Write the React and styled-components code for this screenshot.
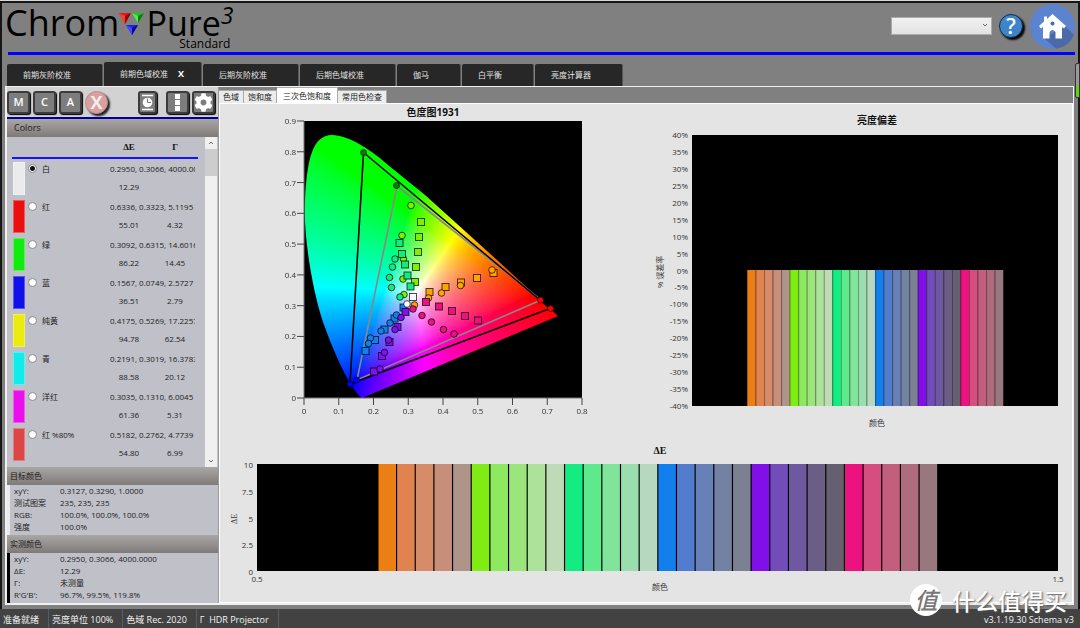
import { useEffect, useRef } from "react";
import styled, { createGlobalStyle } from "styled-components";
import { FaCog } from "react-icons/fa";

const GlobalStyle = createGlobalStyle`
  * {
    box-sizing: border-box;
  }
  body {
    margin: 0;
    background: #808080;
    color: #222;
    font-family: "Open Sans", "Noto Sans CJK SC", sans-serif;
    font-size: 8px;
    line-height: 12px;
  }
  button, select, input {
    font: inherit;
    margin: 0;
  }
`;

const Page = styled.div`
  position: relative;
  display: flex;
  flex-direction: column;
  min-height: 100vh;
  border-top: 1px solid #d8d8d8;
  background: #808080;
`;

const Frame = styled.div`
  flex: 1;
  display: flex;
  flex-direction: column;
  border: 2px solid #161616;
  border-width: 2px 2px 0 2px;
`;

/* header */

const Header = styled.header`
  display: flex;
  justify-content: space-between;
  height: 52px;
  margin: 0 3px 0 6px;
  border-bottom: 3px solid #0000ff;
`;

const Logo = styled.div`
  display: flex;
  align-items: flex-start;
  margin-left: -3px;
  color: #000;
  font-size: 36px;
  line-height: 40px;

  svg {
    width: 26px;
    height: 24px;
    margin: 9px 1px 0 0;
  }
`;

const Edition = styled.div`
  display: flex;
  flex-direction: column;
  align-items: flex-end;
`;

const Pure = styled.div`
  display: flex;
  height: 34px;
  font-size: 34px;
  line-height: 40px;

  sup {
    font-size: 23px;
    font-style: italic;
    line-height: 24px;
    vertical-align: top;
  }
`;

const EditionName = styled.small`
  margin-right: 3px;
  font-size: 12px;
  line-height: 14px;
`;

const HeaderTools = styled.div`
  display: flex;
  align-items: center;
  gap: 7px;
  height: 46px;
`;

const ProfileSelect = styled.select`
  appearance: none;
  width: 101px;
  height: 18px;
  padding: 0 6px;
  border: 1px solid #aaa;
  border-radius: 0;
  background: linear-gradient(#f0f0f0, #e3e3e3);
`;

const SelectWrap = styled.label`
  position: relative;
  display: flex;

  svg {
    position: absolute;
    right: 4px;
    top: 6px;
    pointer-events: none;
  }
`;

const HelpButton = styled.button`
  width: 24px;
  height: 24px;
  padding: 0;
  border: 1px solid #0c2c4c;
  border-radius: 50%;
  background: #3f83c9;
  box-shadow: 2px 2px 2px #000;
  color: #fff;
  font-size: 21px;
  font-weight: 600;
  line-height: 21px;
`;

const HomeButton = styled.button`
  width: 45px;
  height: 45px;
  padding: 0;
  border: 0;
  border-radius: 50%;
  background: none;

  svg {
    display: block;
  }
`;

/* page tabs */

const PageTabs = styled.nav`
  display: flex;
  align-items: flex-end;
  gap: 1px;
  height: 31px;
  margin-left: 5px;
`;

const PageTab = styled.button`
  display: flex;
  align-items: center;
  height: ${(p) => (p.$active ? "24px" : "22px")};
  padding: 0 ${(p) => (p.$active ? "17px" : "31px")} 0 16px;
  border: 0;
  border-right: 1px solid #555;
  border-radius: 2px 2px 0 0;
  background: #272727;
  color: #e2e2e2;

  b {
    width: 16px;
    text-align: right;
    font-size: 9px;
    color: #fff;
  }
`;

/* workspace */

const Workspace = styled.main`
  flex: 1;
  display: flex;
  margin: 0 4px 4px 3px;
  border: 2px solid #f0f0f0;
  border-width: 1px 1px 2px 2px;
`;

const Sidebar = styled.aside`
  flex: none;
  display: flex;
  flex-direction: column;
  width: 212px;
  border-right: 1px solid #999;
  background: #bfc0c8;
`;

const Toolbar = styled.div`
  display: flex;
  align-items: center;
  gap: 3px;
  height: 32px;
  padding: 0 3px 0 0;
  border-bottom: 2px solid #0000a0;
  background: #d2d2d2;
`;

const ToolButton = styled.button`
  display: flex;
  align-items: center;
  justify-content: center;
  width: ${(p) => (p.$narrow ? "19px" : "23px")};
  height: 23px;
  margin-left: ${(p) => (p.$apart ? "auto" : "0")};
  padding: 0;
  border: 2px solid #3c3c3c;
  border-radius: 3px;
  background: #7d7d7d;
  box-shadow: 1px 1px 1px #000;
  color: #fff;
  font-size: 11px;
  font-weight: 600;
`;

const StopButton = styled.button`
  width: 23px;
  height: 23px;
  padding: 0;
  border: 1px solid #b98e8e;
  border-radius: 50%;
  background: #d9a0a0;
  box-shadow: 2px 2px 2px #222;
  color: #eee;
  font-size: 18px;
  font-weight: 700;
  line-height: 20px;
`;

const Gap = styled.span`
  width: 3px;
`;

const PanelTitle = styled.h2`
  flex: none;
  height: 18px;
  margin: 0;
  padding: 0 ${(p) => (p.$wide ? "7px" : "3px")};
  background: linear-gradient(#a9a7a6, #7e7a78);
  color: #1c1c1c;
  font-size: ${(p) => (p.$wide ? "9px" : "8px")};
  font-weight: 400;
  line-height: 18px;
`;

const ColorList = styled.div`
  flex: 1 1 0;
  display: flex;
  justify-content: space-between;
  min-height: 0;
  overflow: hidden;
  padding: 0 1px 0 5px;
`;

const ColorTable = styled.table`
  width: 186px;
  height: 0;
  table-layout: fixed;
  border-spacing: 0;

  th {
    height: 22px;
    padding: 0;
    border-bottom: 2px solid #1414ff;
    font: 700 9px "Liberation Serif", serif;
    color: #111;
  }
  td {
    height: 19px;
    padding: 0;
    text-align: center;
    white-space: nowrap;
  }
`;

const SwatchCell = styled.td`
  vertical-align: top;

  span {
    display: block;
    width: 12px;
    height: 33px;
    margin: 3px 0 0 1px;
    border: 1px solid rgba(255, 255, 255, 0.3);
    background: ${(p) => p.$color};
  }
`;

const NameCell = styled.td`
  label {
    display: flex;
    align-items: center;
    gap: 5px;
  }
`;

const Radio = styled.input.attrs({ type: "radio", name: "color" })`
  appearance: none;
  width: 9px;
  height: 9px;
  border: 1px solid #8a8a8a;
  border-radius: 50%;
  background: #fff;

  &:checked {
    background: radial-gradient(#111 0 2px, #fff 3px);
  }
`;

const XyValue = styled.span`
  display: block;
  width: 85px;
  margin-left: 4px;
  overflow: hidden;
  text-align: left;
`;

const NumberRow = styled.tr`
  && td {
    padding-bottom: 2px;
  }
`;

const Scrollbar = styled.div`
  display: flex;
  flex-direction: column;
  justify-content: space-between;
  width: 12px;
  background: #f0f0f0;

  button {
    display: flex;
    align-items: center;
    justify-content: center;
    height: 12px;
    padding: 0;
    border: 0;
    background: none;
  }
`;

const Thumb = styled.div`
  height: 27px;
  margin-bottom: auto;
  background: #cdcdcd;
`;

const Details = styled.dl`
  flex: none;
  display: grid;
  grid-template-columns: 46px 1fr;
  margin: 0;
  padding: 0 0 2px 4px;
  border-left: 3px solid ${(p) => p.$color};

  dt, dd {
    margin: 0;
    height: 12px;
    white-space: nowrap;
  }
`;

/* charts */

const Content = styled.section`
  flex: 1;
  display: flex;
  flex-direction: column;
  min-width: 0;
  background: #808080;
`;

const ChartTabs = styled.nav`
  display: flex;
  align-items: flex-end;
  height: 16px;
`;

const ChartTab = styled.button`
  height: ${(p) => (p.$active ? "16px" : "13px")};
  padding: 0 ${(p) => (p.$active ? "6px" : "4px")};
  border: 1px solid #aaa;
  border-bottom: 0;
  border-left-width: 0;
  background: ${(p) => (p.$active ? "#fff" : "#ececec")};
  color: #222;
  line-height: 12px;
`;

const ChartPanel = styled.div`
  flex: 1;
  display: grid;
  grid-template-columns: 1fr 1fr;
  align-content: start;
  border: 1px solid #fff;
  background: #e4e4e4;

  svg {
    display: block;
    width: 100%;
    height: auto;
  }
`;

const WideChart = styled.div`
  grid-column: 1 / -1;
`;

const ChartText = styled.text`
  fill: #333;
  font-size: 8px;
  text-anchor: ${(p) => p.$anchor || "middle"};
`;

const ChartTitle = styled.text`
  fill: #111;
  font-size: 10px;
  font-weight: 700;
  text-anchor: middle;
`;

/* status bar */

const StatusBar = styled.footer`
  display: flex;
  height: 19px;
  padding-right: 6px;
  background: #424242;
  color: #f2f2f2;
  font-size: 9px;
  line-height: 22px;

  span {
    padding: 0 9px 0 3px;
    border-right: 1px solid #5c5c5c;
  }
  span:last-child {
    margin-left: auto;
    padding: 0;
    border: 0;
  }
`;

const LevelMeter = styled.div`
  position: absolute;
  top: 62px;
  right: 0;
  width: 5px;
  height: 35px;
  border: 1px solid #333;
  border-radius: 2px 0 0 2px;
  background: linear-gradient(#999 0 21px, #5ad80c 22px);
`;

const Watermark = styled.div`
  position: absolute;
  right: 13px;
  bottom: 12px;
  display: flex;
  align-items: center;
  gap: 10px;
  color: #fff;
  font-family: "Noto Sans CJK SC", sans-serif;
  font-size: 23px;
  font-weight: 500;
  line-height: 24px;
  text-shadow: 1px 1px 2px #555;

  i {
    width: 32px;
    height: 32px;
    border-radius: 50%;
    background: #fff;
    color: #777;
    line-height: 30px;
    text-align: center;
    text-shadow: none;
  }
`;

const colors = [
  { name: "白", color: "#ebebeb", xyY: "0.2950, 0.3066, 4000.0000", de: "12.29", gamma: "" },
  { name: "红", color: "#eb1010", xyY: "0.6336, 0.3323, 5.1195", de: "55.01", gamma: "4.32" },
  { name: "绿", color: "#10eb10", xyY: "0.3092, 0.6315, 14.6016", de: "86.22", gamma: "14.45" },
  { name: "蓝", color: "#1010eb", xyY: "0.1567, 0.0749, 2.5727", de: "36.51", gamma: "2.79" },
  { name: "纯黄", color: "#ebeb10", xyY: "0.4175, 0.5269, 17.2257", de: "94.78", gamma: "62.54" },
  { name: "青", color: "#10ebeb", xyY: "0.2191, 0.3019, 16.3783", de: "88.58", gamma: "20.12" },
  { name: "洋红", color: "#eb10eb", xyY: "0.3035, 0.1310, 6.0045", de: "61.36", gamma: "5.31" },
  { name: "红 %80%", color: "#dc4646", xyY: "0.5182, 0.2762, 4.7739", de: "54.80", gamma: "6.99" },
];

const pageTabs = ["前期灰阶校准", "前期色域校准", "后期灰阶校准", "后期色域校准", "伽马", "白平衡", "亮度计算器"];
const chartTabs = ["色域", "饱和度", "三次色饱和度", "常用色检查"];

const barColors = [
  "#ec7f13", "#e1834f", "#d68b69", "#c78e79", "#af9489",
  "#80ec13", "#8de95f", "#9be57d", "#ade29a", "#bfdab7",
  "#13ec80", "#5fe98d", "#80e59b", "#9adead", "#b5d8bf",
  "#137fec", "#527dcf", "#6880b8", "#7381a3", "#7b8092",
  "#800fe8", "#724dba", "#6e589f", "#6a5e87", "#655f70",
  "#ec1380", "#d64d7f", "#c25f7e", "#af6c7e", "#99777f",
];

// measured values are circles, targets are squares
const markers = [
  {
    fill: "#80f000",
    squares: [[117, 101], [115, 116], [114, 131], [112, 146], [111, 161]],
    circles: [[107, 84.5], [98, 114.5], [99.5, 138], [99, 158], [100, 173.5]],
  },
  {
    fill: "#10ec80",
    squares: [[95.5, 122], [98, 133], [101, 143.5], [103.5, 154.5], [106.5, 165.5]],
    circles: [[91, 138], [88.5, 146], [85.5, 156.5], [87.5, 166.5], [96, 176]],
  },
  {
    fill: "#ffa500",
    squares: [[189.5, 152], [173, 157], [157, 161.5], [141.5, 166], [125.5, 171]],
    circles: [[188, 149], [156.5, 164.5], [137.5, 172], [124.5, 177], [110.5, 184]],
  },
  {
    fill: "#ec1080",
    squares: [[122, 181], [135, 185.5], [148, 190], [161, 195], [174, 199.5]],
    circles: [[109, 188], [118, 194.5], [127.5, 201], [139.5, 208.5], [150, 213]],
  },
  {
    fill: "#1080ec",
    squares: [[99.5, 186.5], [90.5, 197.5], [80.5, 208.5], [71, 219], [61.5, 230]],
    circles: [[92.5, 194], [86, 202], [77, 210], [66.5, 217], [64.5, 222.5]],
  },
  {
    fill: "#8010ec",
    squares: [[101.5, 191], [93.5, 206], [85.5, 221], [78, 235], [70, 250.5]],
    circles: [[97, 196.5], [91, 208.5], [84.5, 219], [80.5, 231.5], [76, 248]],
  },
  { fill: "#fff", squares: [[109, 176]], circles: [[103, 183]] },
];

const LOCUS =
  "M58 277 C48 270 33 240 19 201 C8 167 -1 112 1 79 C3 40 8 14 28 14 C44 14 66 28 84 44 L121 74 L193 139 L254 195 Z";

const W = 278;
const H = 277;

const rgbAt = (x, y) => {
  const z = 1 - x - y;
  const rgb = [
    3.2406 * x - 1.5372 * y - 0.4986 * z,
    -0.9689 * x + 1.8758 * y + 0.0415 * z,
    1.2 * (0.0557 * x - 0.204 * y + 1.057 * z),
  ].map((v) => Math.max(0, v));
  const max = Math.max(...rgb);
  return rgb.map((v) => 255 * Math.pow(v / max, 0.65));
};

const LocusFill = () => {
  const ref = useRef(null);

  useEffect(() => {
    const ctx = ref.current.getContext("2d");
    const image = ctx.createImageData(W, H);
    for (let py = 0; py < H; py++) {
      for (let px = 0; px < W; px++) {
        const [r, g, b] = rgbAt((px / W) * 0.8, ((H - py) / H) * 0.9);
        image.data.set([r, g, b, 255], (py * W + px) * 4);
      }
    }
    ctx.putImageData(image, 0, 0);
    ctx.globalCompositeOperation = "destination-in";
    ctx.fill(new Path2D(LOCUS));
  }, []);

  return (
    <foreignObject width={W} height={H}>
      <canvas ref={ref} width={W} height={H} style={{ display: "block" }} />
    </foreignObject>
  );
};

const GamutPoint = ({ x, y, fill }) => (
  <circle cx={x} cy={y} r="3" fill={fill} stroke="#000" strokeOpacity="0.6" />
);

const ChromaticityChart = () => (
  <svg viewBox="0 0 426 330" role="img" aria-label="色度图1931">
    <ChartTitle x="213" y="12">色度图1931</ChartTitle>
    <g transform="translate(84 17)">
      <rect width={W} height={H} fill="#000" />
      <LocusFill />
      <path d="M93 65 L237 179 L53 259 Z" fill="none" stroke="#888" strokeWidth="1.6" />
      <path d="M59.5 31.5 L246 187.5 L46 263 Z" fill="none" stroke="#000" strokeWidth="1.6" />
      <GamutPoint x={59.5} y={31.5} fill="#008000" />
      <GamutPoint x={92.5} y={64.5} fill="#008000" />
      <GamutPoint x={246.5} y={187.5} fill="#f00" />
      <GamutPoint x={236.5} y={179} fill="#f00" />
      <GamutPoint x={46} y={263} fill="#00f" />
      <GamutPoint x={52.5} y={259} fill="#00f" />
      {markers.map((m) => (
        <g key={m.fill} fill={m.fill} stroke="#000" strokeOpacity="0.7">
          {m.squares.map(([x, y]) => (
            <rect key={x} x={x - 3.5} y={y - 3.5} width="7" height="7" />
          ))}
          {m.circles.map(([x, y]) => (
            <circle key={x} cx={x} cy={y} r="3.3" />
          ))}
        </g>
      ))}
      <path d={`M0 0 V${H} H${W}`} fill="none" stroke="#777" />
      {[0, 1, 2, 3, 4, 5, 6, 7, 8, 9].map((n) => {
        const y = H - (n * H) / 9;
        return (
          <g key={n}>
            <path d={`M-7 ${y} H0`} stroke="#444" />
            <ChartText x="-8" y={y + 3} $anchor="end">{n ? `0.${n}` : "0"}</ChartText>
          </g>
        );
      })}
      {[0, 1, 2, 3, 4, 5, 6, 7, 8].map((n) => {
        const x = (n * W) / 8;
        return (
          <g key={n}>
            <path d={`M${x} ${H} V${H + 7}`} stroke="#444" />
            <ChartText x={x} y={H + 16}>{n ? `0.${n}` : "0"}</ChartText>
          </g>
        );
      })}
    </g>
  </svg>
);

const LuminanceChart = () => (
  <svg viewBox="0 0 426 330" role="img" aria-label="亮度偏差">
    <ChartTitle x="231" y="20">亮度偏差</ChartTitle>
    <ChartText transform="translate(17 168) rotate(-90)">% 误差率</ChartText>
    <g transform="translate(46 31)">
      <rect width="366" height="271" fill="#000" />
      {barColors.map((color, i) => (
        <g key={color}>
          <rect x={55 + i * 8.54} y="135" width="8.6" height="136" fill={color} />
          <path d={`M${55.5 + i * 8.54} 135 V271`} stroke="#000" strokeOpacity="0.3" />
        </g>
      ))}
      {Array.from({ length: 17 }, (_, i) => (
        <ChartText key={i} x="-4" y={3 + (i * 271) / 16} $anchor="end">{`${40 - i * 5}%`}</ChartText>
      ))}
      <ChartText x="185" y="291">颜色</ChartText>
    </g>
  </svg>
);

const DeltaChart = () => (
  <svg viewBox="0 0 852 168" role="img" aria-label="ΔE">
    <ChartTitle x="440" y="20" fontFamily="Liberation Serif, serif">ΔE</ChartTitle>
    <ChartText transform="translate(17 85) rotate(-90)" fontFamily="Liberation Serif, serif">ΔE</ChartText>
    <g transform="translate(37 30)">
      <rect width="801" height="107" fill="#000" />
      {barColors.map((color, i) => (
        <rect key={color} x={121.5 + i * 18.66} width="17.5" height="107" fill={color} />
      ))}
      {["10", "7.5", "5", "2.5", "0"].map((label, i) => (
        <ChartText key={label} x="-4" y={4 + (i * 107) / 4} $anchor="end">{label}</ChartText>
      ))}
      <ChartText x="0" y="118">0.5</ChartText>
      <ChartText x="801" y="118">1.5</ChartText>
      <ChartText x="403" y="126">颜色</ChartText>
    </g>
  </svg>
);

const LogoMark = () => (
  <svg viewBox="0 0 26 24">
    <path d="M0 1 H12 L6 12 Z" fill="#e01818" />
    <path d="M0 1 L6 4 V12 Z" fill="#ff3b30" />
    <path d="M12 1 L6 4 V12 Z" fill="#8c0808" />
    <path d="M13 1 H25 L19 11 Z" fill="#1ec81e" />
    <path d="M13 1 L19 4 V11 Z" fill="#4cf04c" />
    <path d="M25 1 L19 4 V11 Z" fill="#0b7a0b" />
    <path d="M7 13 H19 L13 23 Z" fill="#2020e0" />
    <path d="M7 13 L13 16 V23 Z" fill="#4848ff" />
    <path d="M19 13 L13 16 V23 Z" fill="#0808a0" />
  </svg>
);

const Chevron = ({ up }) => (
  <svg width="6" height="4" viewBox="0 0 6 4">
    <path d={up ? "M1 3 L3 1 L5 3" : "M1 1 L3 3 L5 1"} fill="none" stroke="#666" />
  </svg>
);

const HomeIcon = () => (
  <svg width="45" height="45" viewBox="0 0 45 45">
    <circle cx="22.5" cy="22.5" r="22.5" fill="#5b83cf" />
    <path d="M35 22 L44 31 A22.5 22.5 0 0 1 26 44.7 L14 34 Z" fill="#4a6aa8" />
    <path
      d="M22.5 10 L36 22 L34 24.5 L32 23 V34.5 H25.5 V28 Q22.5 24 19.5 28 V34.5 H13 V23 L11 24.5 L9 22 L14 17.5 V12.5 H17 V15 Z"
      fill="#fff"
    />
    <circle cx="22.5" cy="19.5" r="2" fill="#4a6aa8" />
  </svg>
);

const MeterIcon = () => (
  <svg width="13" height="17" viewBox="0 0 13 17">
    <path d="M1 1.5 H12 M1 15.5 H12" stroke="#fff" strokeWidth="1.5" />
    <circle cx="6.5" cy="8.5" r="4.8" fill="#fff" />
    <path d="M6.5 8.5 V4.5 M6.5 8.5 H10" stroke="#777" strokeWidth="1.2" />
  </svg>
);

const DotsIcon = () => (
  <svg width="5" height="17" viewBox="0 0 5 17">
    <path d="M0 0 H5 V5 H0 Z M0 6 H5 V11 H0 Z M0 12 H5 V17 H0 Z" fill="#fff" />
  </svg>
);

const ColorRows = ({ name, color, xyY, de, gamma, checked }) => (
  <>
    <tr>
      <SwatchCell rowSpan={2} $color={color}>
        <span />
      </SwatchCell>
      <NameCell>
        <label>
          <Radio defaultChecked={checked} />
          {name}
        </label>
      </NameCell>
      <td colSpan={2}>
        <XyValue>{xyY}</XyValue>
      </td>
    </tr>
    <NumberRow>
      <td />
      <td>{de}</td>
      <td>{gamma}</td>
    </NumberRow>
  </>
);

export default function App() {
  return (
    <Page>
      <GlobalStyle />
      <Frame>
        <Header>
          <Logo>
            <span>Chrom</span>
            <LogoMark />
            <Edition>
              <Pure>
                Pure<sup>3</sup>
              </Pure>
              <EditionName>Standard</EditionName>
            </Edition>
          </Logo>
          <HeaderTools>
            <SelectWrap>
              <ProfileSelect aria-label="Profile" />
              <Chevron />
            </SelectWrap>
            <HelpButton>?</HelpButton>
            <HomeButton aria-label="Home">
              <HomeIcon />
            </HomeButton>
          </HeaderTools>
        </Header>

        <PageTabs>
          {pageTabs.map((tab, i) => (
            <PageTab key={tab} $active={i === 1}>
              {tab}
              {i === 1 && <b>X</b>}
            </PageTab>
          ))}
        </PageTabs>

        <Workspace>
          <Sidebar>
            <Toolbar>
              <ToolButton>M</ToolButton>
              <ToolButton>C</ToolButton>
              <ToolButton>A</ToolButton>
              <StopButton>X</StopButton>
              <ToolButton $narrow $apart aria-label="Meter">
                <MeterIcon />
              </ToolButton>
              <Gap />
              <ToolButton aria-label="Options">
                <DotsIcon />
              </ToolButton>
              <ToolButton aria-label="Settings">
                <FaCog size={19} />
              </ToolButton>
            </Toolbar>

            <PanelTitle $wide>Colors</PanelTitle>
            <ColorList>
              <ColorTable>
                <colgroup>
                  <col style={{ width: 16 }} />
                  <col style={{ width: 78 }} />
                  <col />
                  <col />
                </colgroup>
                <thead>
                  <tr>
                    <th />
                    <th />
                    <th>ΔE</th>
                    <th>Γ</th>
                  </tr>
                </thead>
                <tbody>
                  {colors.map((c, i) => (
                    <ColorRows key={c.name} {...c} checked={i === 0} />
                  ))}
                </tbody>
              </ColorTable>
              <Scrollbar>
                <button aria-label="Up">
                  <Chevron up />
                </button>
                <Thumb />
                <button aria-label="Down">
                  <Chevron />
                </button>
              </Scrollbar>
            </ColorList>

            <PanelTitle>目标颜色</PanelTitle>
            <Details $color="#ebebeb">
              <dt>xyY:</dt>
              <dd>0.3127, 0.3290, 1.0000</dd>
              <dt>测试图案</dt>
              <dd>235, 235, 235</dd>
              <dt>RGB:</dt>
              <dd>100.0%, 100.0%, 100.0%</dd>
              <dt>强度</dt>
              <dd>100.0%</dd>
            </Details>

            <PanelTitle>实测颜色</PanelTitle>
            <Details $color="#000">
              <dt>xyY:</dt>
              <dd>0.2950, 0.3066, 4000.0000</dd>
              <dt>ΔE:</dt>
              <dd>12.29</dd>
              <dt>Γ:</dt>
              <dd>未测量</dd>
              <dt>R'G'B':</dt>
              <dd>96.7%, 99.5%, 119.8%</dd>
            </Details>
          </Sidebar>

          <Content>
            <ChartTabs>
              {chartTabs.map((tab, i) => (
                <ChartTab key={tab} $active={i === 2}>
                  {tab}
                </ChartTab>
              ))}
            </ChartTabs>
            <ChartPanel>
              <ChromaticityChart />
              <LuminanceChart />
              <WideChart>
                <DeltaChart />
              </WideChart>
            </ChartPanel>
          </Content>
        </Workspace>
      </Frame>

      <StatusBar>
        <span>准备就绪</span>
        <span>亮度单位 100%</span>
        <span>色域 Rec. 2020</span>
        <span>Γ&nbsp; HDR Projector</span>
        <span>v3.1.19.30 Schema v3</span>
      </StatusBar>

      <LevelMeter />
      <Watermark>
        <i>值</i>
        什么值得买
      </Watermark>
    </Page>
  );
}
